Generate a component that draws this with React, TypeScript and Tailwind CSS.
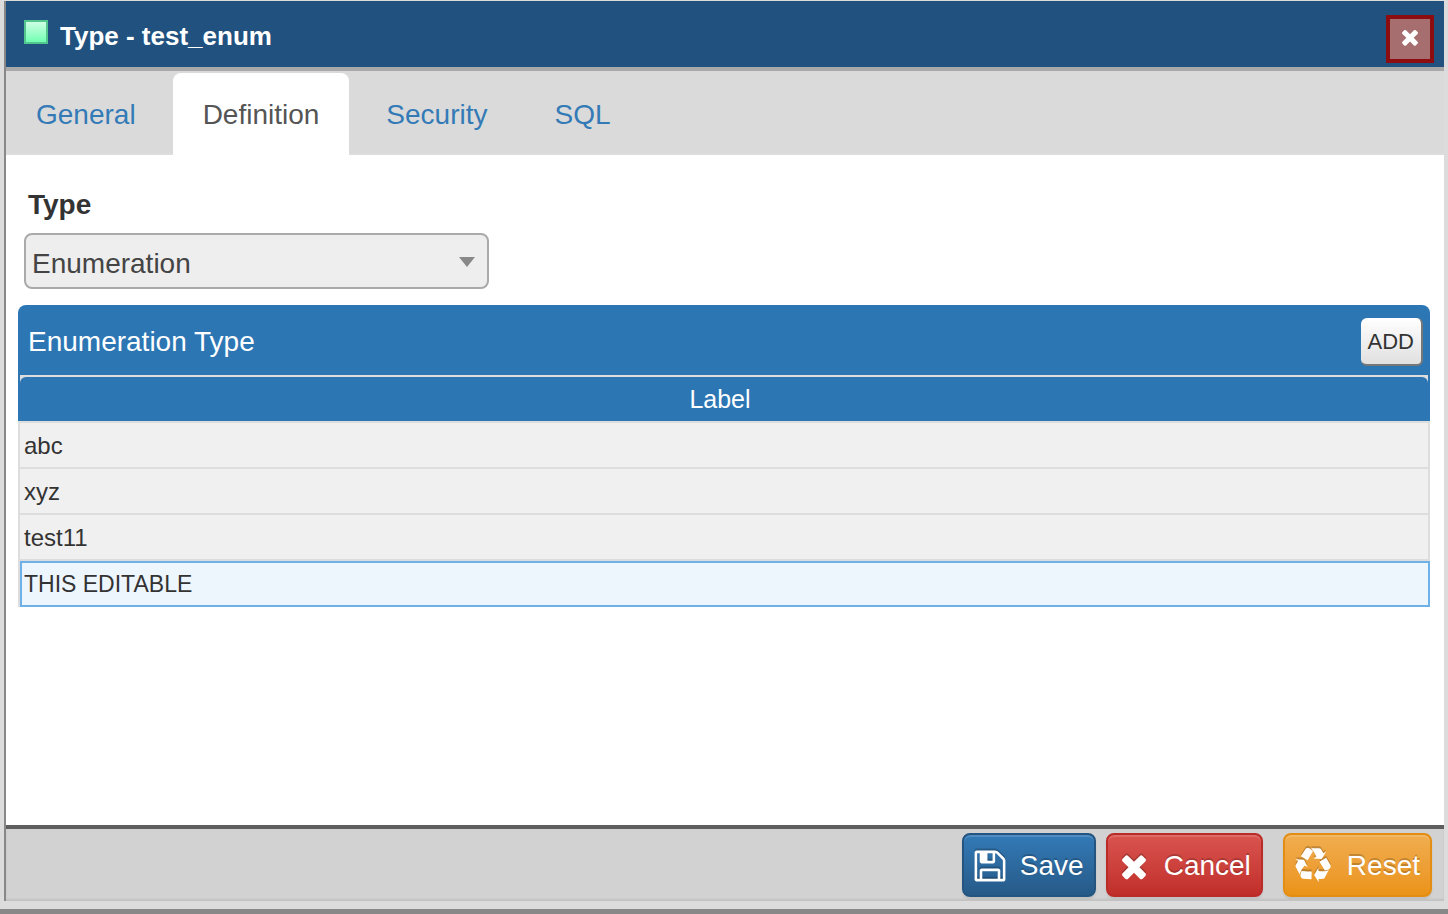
import { useState } from "react";
import clsx from "clsx";

const tabs = ["General", "Definition", "Security", "SQL"];

const labels = ["abc", "xyz", "test11"];

function CloseIcon({ className }: { className?: string }) {
  return (
    <svg viewBox="0 0 1792 1792" fill="currentColor" aria-hidden="true" className={className}>
      <path d="M1490 1322q0 40-28 68l-136 136q-28 28-68 28t-68-28l-294-294-294 294q-28 28-68 28t-68-28l-136-136q-28-28-28-68t28-68l294-294-294-294q-28-28-28-68t28-68l136-136q28-28 68-28t68 28l294 294 294-294q28-28 68-28t68 28l136 136q28 28 28 68t-28 68l-294 294 294 294q28 28 28 68z" />
    </svg>
  );
}

function SaveIcon({ className }: { className?: string }) {
  return (
    <svg viewBox="0 0 1792 1792" fill="currentColor" aria-hidden="true" className={className}>
      <path d="M512 1536h768v-384h-768v384zm896 0h128v-896q0-14-10-38.5t-20-34.5l-281-281q-10-10-34-20t-39-10v416q0 40-28 68t-68 28h-576q-40 0-68-28t-28-68v-416h-128v1280h128v-416q0-40 28-68t68-28h832q40 0 68 28t28 68v416zm-384-928v-320q0-13-9.5-22.5t-22.5-9.5h-192q-13 0-22.5 9.5t-9.5 22.5v320q0 13 9.5 22.5t22.5 9.5h192q13 0 22.5-9.5t9.5-22.5zm640 32v928q0 40-28 68t-68 28h-1344q-40 0-68-28t-28-68v-1344q0-40 28-68t68-28h928q40 0 88 20t76 48l280 280q28 28 48 76t20 88z" />
    </svg>
  );
}

function RecycleIcon({ className }: { className?: string }) {
  return (
    <svg viewBox="0 0 1792 1792" fill="currentColor" aria-hidden="true" className={className}>
      <path d="M836 1169l-15 368-2 22-420-29q-36-3-67-31.5t-47-65.5q-11-27-14.5-55t4-65 12-55 21.5-64 19-53q78 12 509 28zm-387-586l180 379-147-92q-63 72-111.5 144.5t-72.5 125-39.5 94.5-18.5 63l-4 21-190-357q-17-26-18-56t6-47l8-18q35-63 114-188l-140-86zm1231 517l-188 359q-12 29-36.5 46.5t-43.5 20.5l-18 4q-71 7-219 12l8 164-230-367 211-362 7 173q170 16 283 5t170-33zm-785-924q-47 63-265 435l-317-187-19-12 225-356q20-31 60-45t80-10q24 2 48.5 12t42 21 41.5 33 36 34.5 36 39.5 32 35zm655 307l212 363q18 37 12.5 76t-27.5 74q-13 20-33 37t-38 28-48.5 22-47 16-51.5 14-46 12q-34-72-265-436l313-195zm-143-226l142-83-220 373-419-20 151-86q-34-89-75-166t-75.5-123.5-64.5-80-47-46.5l-17-13 405 1q31-3 58 10.5t39 28.5l11 15q39 61 112 190z" />
    </svg>
  );
}

const footerButton =
  "flex h-16 items-center rounded-lg border-2 bg-linear-to-b pt-0.5 pr-2.5 text-white shadow-[inset_0_2px_0_rgba(255,255,255,0.15),0_2px_2px_rgba(0,0,0,0.08)] text-shadow-[0_-2px_0_rgba(0,0,0,0.2)]";

const footerIcon = "h-9 w-9 drop-shadow-[0_-2px_0_rgba(0,0,0,0.2)]";

export default function App() {
  const [active, setActive] = useState("Definition");
  const [value, setValue] = useState("THIS EDITABLE");

  return (
    <div className="flex min-h-screen flex-col border-b-[5px] border-[#888] bg-[#dcdcdc] pt-px pr-1 pb-2 pl-1 font-['Liberation_Sans',Arial,sans-serif] text-[28px] leading-8 text-[#333]">
      <div className="flex flex-1 flex-col border-l-2 border-[#888] bg-white">
        <header className="flex items-start justify-between border-b-4 border-[#a9a9a9] bg-[#21527f] pr-2.5 pl-[18px]">
          <div className="flex items-start gap-3 pt-[19px]">
            <svg viewBox="0 0 24 24" className="h-6 w-6" aria-hidden="true">
              <defs>
                <linearGradient id="typeFill" x1="0" y1="0" x2="0" y2="1">
                  <stop offset="0" stopColor="#d2ffe6" />
                  <stop offset="1" stopColor="#6dffb0" />
                </linearGradient>
              </defs>
              <rect x="1" y="1" width="22" height="22" fill="url(#typeFill)" stroke="#52c68c" strokeWidth="2" />
            </svg>
            <h1 className="text-[26px] leading-8 font-bold text-white">Type - test_enum</h1>
          </div>
          <button
            type="button"
            aria-label="Close"
            className="mt-3.5 mb-1 flex h-12 w-12 items-center justify-center border-4 border-[#8b0d0f] bg-[#a66e6e] pb-1 text-white"
          >
            <CloseIcon className="h-6 w-6" />
          </button>
        </header>

        <nav role="tablist" className="flex gap-[7px] border-b-2 border-[#ddd] bg-[#dadada] pt-0.5">
          {tabs.map((tab) => (
            <button
              key={tab}
              type="button"
              role="tab"
              aria-selected={active === tab}
              onClick={() => setActive(tab)}
              className={clsx(
                "-mb-0.5 h-[82px] rounded-t-lg px-[30px] pt-0.5",
                active === tab ? "bg-white text-[#555]" : "text-[#337ab7]"
              )}
            >
              {tab}
            </button>
          ))}
        </nav>

        <main className="flex-1 px-3 pr-3.5 pt-[34px] pb-6">
          <div className="px-1.5">
            <label htmlFor="type" className="block pl-1 font-bold">
              Type
            </label>
            <div className="relative mt-3 w-[465px] max-w-full">
              <select
                id="type"
                className="block h-14 w-full appearance-none rounded-lg border-2 border-[#aaa] bg-[#eee] pt-1.5 pr-10 pl-1.5 text-[#444]"
              >
                <option>Enumeration</option>
              </select>
              <svg viewBox="0 0 16 10" className="pointer-events-none absolute top-6 right-3.5 h-2.5 w-4" aria-hidden="true">
                <path d="M0 0h16L8 10z" fill="#888" />
              </svg>
            </div>
          </div>

          <section className="mt-4">
            <div className="flex h-[70px] items-center justify-between rounded-t-lg bg-[#2c76b4] pt-1 pr-[7px] pl-2.5">
              <h2 className="text-white">Enumeration Type</h2>
              <button
                type="button"
                className="h-12 rounded-md border-r-2 border-b-2 border-[#777] bg-linear-to-b from-white to-[#e0e0e0] px-[7px] pt-0.5 text-[22px] text-[#333]"
              >
                ADD
              </button>
            </div>
            <table className="w-full border-separate border-spacing-0 text-2xl leading-8">
              <thead>
                <tr>
                  <th className="bg-[#2c76b4] px-0.5 py-0 font-normal">
                    <div className="bg-[#ddd] pt-0.5">
                      <div className="h-11 rounded-t-md bg-[#2c76b4] pt-1.5 pr-2 text-[25px] text-white">Label</div>
                    </div>
                  </th>
                </tr>
              </thead>
              <tbody>
                {labels.map((label) => (
                  <tr key={label}>
                    <td className="h-[46px] border-x-2 border-t-2 border-[#ddd] bg-[#f0f0f0] px-1 pt-0.5 pb-0">{label}</td>
                  </tr>
                ))}
                <tr>
                  <td className="border-t-2 border-l-2 border-[#ddd] p-0">
                    <input
                      aria-label="Label"
                      value={value}
                      onChange={(e) => setValue(e.target.value)}
                      className="block h-[46px] w-full border-2 border-[#6eb1e8] bg-[#edf5fd] px-0.5 text-[23px] outline-none"
                    />
                  </td>
                </tr>
              </tbody>
            </table>
          </section>
        </main>

        <footer className="flex justify-end border-t-4 border-[#5e5e5e] bg-[#d2d2d2] pt-1 pr-3 pb-1 shadow-[inset_0_-2px_2px_rgba(0,0,0,0.08)]">
          <button type="button" className={clsx(footerButton, "mr-2.5 gap-3 border-[#245580] from-[#337ab7] to-[#265a88] pl-2")}>
            <SaveIcon className={footerIcon} />
            Save
          </button>
          <button type="button" className={clsx(footerButton, "mr-5 gap-3 border-[#b92c28] from-[#d9534f] to-[#c12e2a] pl-2")}>
            <CloseIcon className={footerIcon} />
            Cancel
          </button>
          <button type="button" className={clsx(footerButton, "gap-4 border-[#e38d13] from-[#f0ad4e] to-[#eb9316] pl-2.5")}>
            <RecycleIcon className={footerIcon} />
            Reset
          </button>
        </footer>
      </div>
    </div>
  );
}
